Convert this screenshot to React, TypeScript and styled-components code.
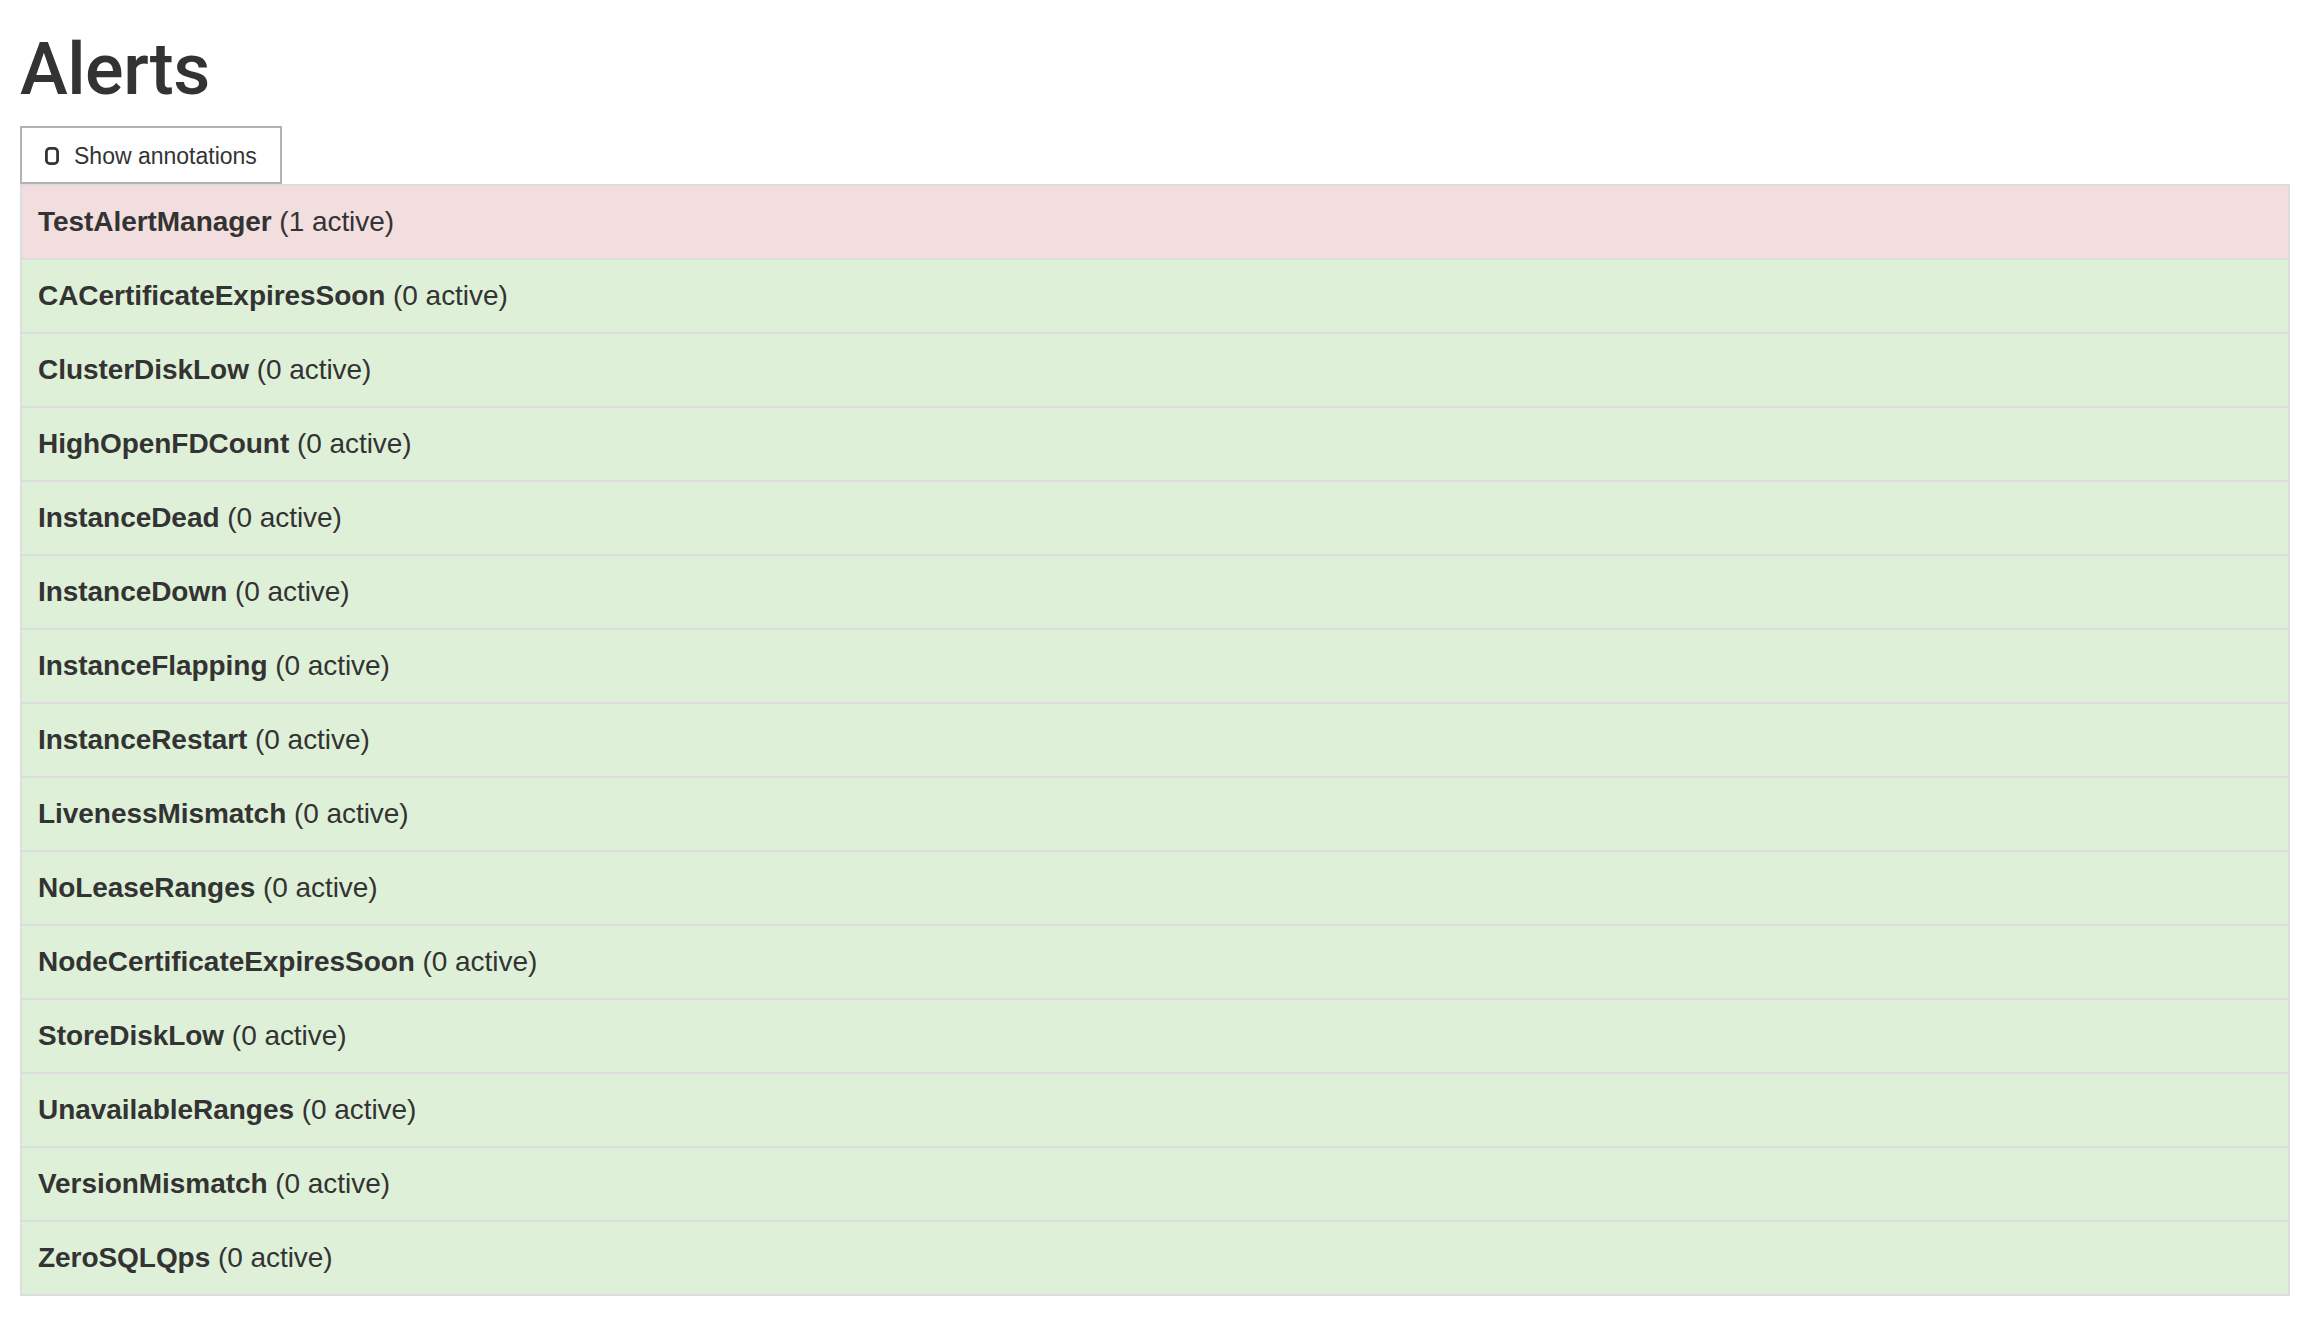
import * as React from 'react'
import styled, { createGlobalStyle } from 'styled-components'

const GlobalStyle = createGlobalStyle`
  html, body {
    margin: 0;
    padding: 0;
    background: #fff;
  }

  body {
    padding: 0 22px 0 20px;
    font-family: 'Liberation Sans', Arial, Helvetica, sans-serif;
    color: #333;
  }
`

const Title = styled('h1')`
  margin: 30px 0 17px;
  font-family: Roboto, 'Liberation Sans', Arial, sans-serif;
  font-size: 72px;
  line-height: 79px;
  font-weight: 500;
  letter-spacing: -0.5px;
  color: #333;
`

const ToggleButton = styled('button')`
  display: flex;
  flex-direction: row;
  align-items: center;
  gap: 15px;
  box-sizing: border-box;
  height: 58px;
  width: 262px;
  padding: 2px 0 0 23px;
  border: 2px solid #b3b3b3;
  background: #fff;
  font-family: 'Liberation Sans', Arial, Helvetica, sans-serif;
  font-size: 23px;
  white-space: nowrap;
  color: #333;
  cursor: pointer;

  svg {
    flex-shrink: 0;
  }
`

const Panel = styled('section')`
  display: flex;
  flex-direction: column;
  border: 2px solid #ddd;
`

const AlertRow = styled('div')<{ $firing: boolean }>`
  height: 72px;
  padding: 0 16px;
  font-size: 28px;
  line-height: 72px;
  letter-spacing: -0.05px;
  color: #333;
  background-color: ${(p) => (p.$firing ? '#f2dede' : '#dff0d8')};
  border-bottom: 2px solid #ddd;

  &:last-child {
    border-bottom: 0;
  }

  strong {
    font-weight: 700;
  }
`

const alerts: { name: string; active: number }[] = [
  { name: 'TestAlertManager', active: 1 },
  { name: 'CACertificateExpiresSoon', active: 0 },
  { name: 'ClusterDiskLow', active: 0 },
  { name: 'HighOpenFDCount', active: 0 },
  { name: 'InstanceDead', active: 0 },
  { name: 'InstanceDown', active: 0 },
  { name: 'InstanceFlapping', active: 0 },
  { name: 'InstanceRestart', active: 0 },
  { name: 'LivenessMismatch', active: 0 },
  { name: 'NoLeaseRanges', active: 0 },
  { name: 'NodeCertificateExpiresSoon', active: 0 },
  { name: 'StoreDiskLow', active: 0 },
  { name: 'UnavailableRanges', active: 0 },
  { name: 'VersionMismatch', active: 0 },
  { name: 'ZeroSQLQps', active: 0 },
]

function CheckboxIcon() {
  return (
    <svg width="14" height="18" viewBox="0 0 14 18" aria-hidden="true">
      <rect x="1.4" y="1.4" width="11.2" height="15.2" rx="3.4" fill="none" stroke="#333" strokeWidth="2.8" />
    </svg>
  )
}

export default function App() {
  return (
    <>
      <GlobalStyle />
      <Title>Alerts</Title>
      <ToggleButton type="button">
        <CheckboxIcon />
        <span>Show annotations</span>
      </ToggleButton>
      <Panel>
        {alerts.map((a) => (
          <AlertRow key={a.name} $firing={a.active > 0}>
            <strong>{a.name}</strong> ({a.active} active)
          </AlertRow>
        ))}
      </Panel>
    </>
  )
}
